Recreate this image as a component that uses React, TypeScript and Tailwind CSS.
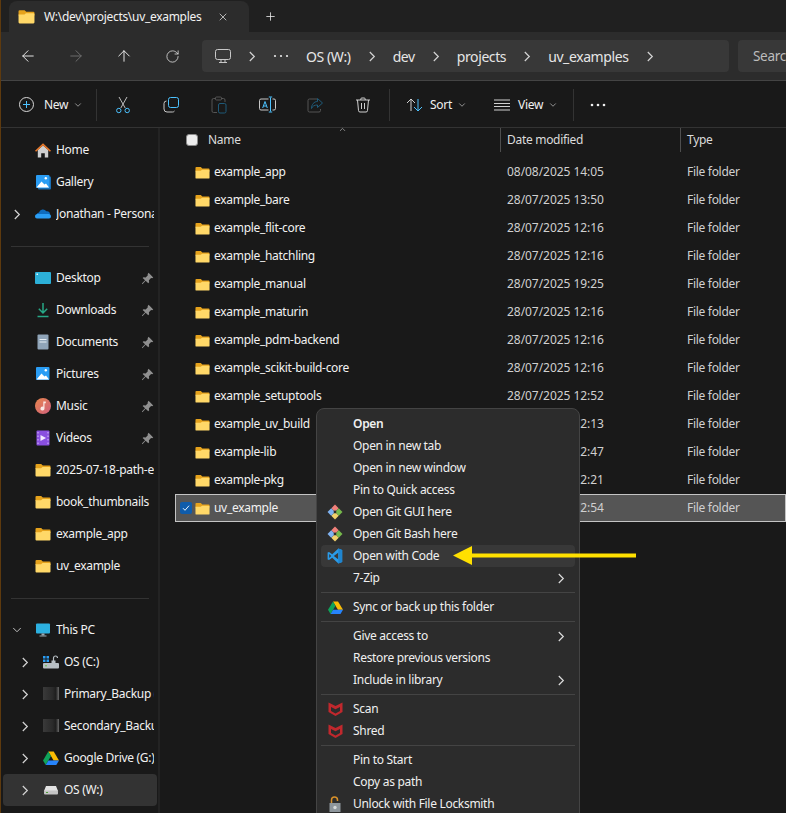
import type { ReactNode } from 'react';
import {
  ArrowLeft,
  ArrowRight,
  ArrowUp,
  ChevronDown,
  Plus,
  RotateCw,
  X,
} from 'lucide-react';

function Folder({ size = 15 }: { size?: number }) {
  return (
    <svg width={size} height={size} viewBox="0 0 16 16" className="shrink-0">
      <path d="M.5 3a1 1 0 0 1 1-1h4.700l1.600 1.600H14.500a1 1 0 0 1 1 1V7H.5z" fill="#e5a21c" />
      <path d="M.5 6.200h5.600L7.500 5h7a1 1 0 0 1 1 1v7.500a1 1 0 0 1-1 1h-13a1 1 0 0 1-1-1z" fill="#ffd868" />
    </svg>
  );
}

function Chevron({ color = '#d4d4d4' }: { color?: string }) {
  return (
    <svg width="8" height="11" viewBox="0 0 8 11" fill="none" stroke={color} strokeWidth="1.200" className="shrink-0">
      <path d="M1.800 1 6.300 5.500 1.800 10" />
    </svg>
  );
}

function Pin() {
  return (
    <svg width="13" height="13" viewBox="0 0 12 12" className="shrink-0">
      <path d="M7 .7l4.300 4.300-1 .7-1-.2-2 2 .2 2-.8.8L4.300 8.100 1.300 11.200.8 10.700l3-3L1.500 5.600l.8-.8 2 .2 2-2-.2-1z" fill="#8f8f8f" />
    </svg>
  );
}

function HomeIcon() {
  return (
    <svg width="17" height="17" viewBox="0 0 16 16">
      <path d="M2.800 7.500 8 3l5.200 4.500V15H9.800v-4.300H6.200V15H2.800z" fill="#cfcfcf" />
      <path d="M0 8.200 8 .8l8 7.400-1.100 1L8 3 1.100 9.200z" fill="#e8782a" />
    </svg>
  );
}

function GalleryIcon({ stacked }: { stacked?: boolean }) {
  return (
    <svg width="16" height="16" viewBox="0 0 16 16">
      {stacked && <rect x="3" y="2.500" width="13" height="13" rx="1" fill="#1a6fb5" />}
      <rect x="1" y="1" width="13.500" height="13" rx="1" fill="#2a9df4" />
      <path d="M1.500 13.500 6.500 7.500 9.500 10.500 11 9.500l3 4z" fill="#ffffff" />
      <circle cx="10.800" cy="4.300" r="1.200" fill="#ffffff" />
    </svg>
  );
}

function CloudIcon() {
  return (
    <svg width="16" height="16" viewBox="0 0 16 16">
      <path d="M4 6.500a4 4 0 0 1 7.300-1.200A3.200 3.200 0 0 1 15 8v1H1.500A3 3 0 0 1 4 6.500z" fill="#0f6cbd" />
      <path d="M0 10.500A2.500 2.500 0 0 1 3 8h10a2.500 2.500 0 0 1 3 2.500 2 2 0 0 1-2 2H2a2 2 0 0 1-2-2z" fill="#2a9df4" />
    </svg>
  );
}

function DesktopIcon() {
  return (
    <svg width="16" height="16" viewBox="0 0 16 16">
      <rect x="0" y="2" width="16" height="12" rx="1" fill="#2cb0d8" />
      <rect x="1.500" y="3.500" width="1.500" height="1.500" fill="#e5f7fb" />
    </svg>
  );
}

function DownloadIcon() {
  return (
    <svg width="16" height="16" viewBox="0 0 16 16" fill="none" stroke="#27a887" strokeWidth="1.500">
      <path d="M8 1v9.500M3.800 6.800 8 11l4.200-4.200M2.500 14.500h11" />
    </svg>
  );
}

function DocumentIcon() {
  return (
    <svg width="16" height="16" viewBox="0 0 16 16">
      <rect x="2.500" y="0.500" width="11" height="15" rx="1" fill="#8fa4b8" />
      <rect x="4.500" y="5" width="7" height="1" fill="#e6edf3" />
      <rect x="4.500" y="7.500" width="7" height="1" fill="#e6edf3" />
    </svg>
  );
}

function MusicIcon() {
  return (
    <svg width="16" height="16" viewBox="0 0 16 16">
      <defs>
        <linearGradient id="music" x1="0" y1="0" x2="1" y2="1">
          <stop offset="0" stopColor="#e8854c" />
          <stop offset="1" stopColor="#d0607e" />
        </linearGradient>
      </defs>
      <circle cx="8" cy="8" r="8" fill="url(#music)" />
      <path d="M8.300 3.500h2.500v1.700H9.500V10.500a2 2 0 1 1-1.200-1.800z" fill="#fbe9e4" />
    </svg>
  );
}

function VideoIcon() {
  return (
    <svg width="16" height="16" viewBox="0 0 16 16">
      <rect x="1.500" y="0.500" width="13" height="15" rx="1" fill="#8a4fe0" />
      <path d="M5.500 5 11 8l-5.500 3z" fill="#f3eaff" />
      <path d="M3 2v1.500M3 5.500V7M3 9v1.500M3 12.500V14M13 2v1.500M13 5.500V7M13 9v1.500M13 12.500V14" stroke="#d6bdfa" strokeWidth="1" />
    </svg>
  );
}

function MonitorIcon() {
  return (
    <svg width="16" height="16" viewBox="0 0 16 16">
      <rect x="1" y="1.500" width="14" height="10" rx="1" fill="#2cb0e0" />
      <rect x="6.500" y="11.500" width="3" height="2" fill="#9aa7b0" />
      <rect x="4.500" y="13.500" width="7" height="1" fill="#9aa7b0" />
    </svg>
  );
}

function DriveCIcon() {
  return (
    <svg width="16" height="16" viewBox="0 0 16 16">
      <rect x="0" y="9" width="16" height="5.500" rx="1" fill="#b8bfc4" />
      <rect x="2" y="11.300" width="2" height="1" fill="#5fc74a" />
      <rect x="0" y="2" width="2.500" height="2.500" fill="#2a9df4" />
      <rect x="3.500" y="2" width="2.500" height="2.500" fill="#2a9df4" />
      <rect x="0" y="5.500" width="2.500" height="2.500" fill="#2a9df4" />
      <rect x="3.500" y="5.500" width="2.500" height="2.500" fill="#2a9df4" />
      <path d="M10.500 8V4a2 2 0 0 1 4 0" fill="none" stroke="#b8bfc4" strokeWidth="1.200" />
      <rect x="8.500" y="6.500" width="4" height="2.500" fill="#b8bfc4" />
    </svg>
  );
}

function BlurDriveIcon() {
  return (
    <svg width="16" height="16" viewBox="0 0 16 16">
      <defs>
        <linearGradient id="blurDrive" x1="0" y1="0" x2="1" y2="0">
          <stop offset="0" stopColor="#3a3a3a" />
          <stop offset="0.600" stopColor="#2a2a2a" />
          <stop offset="0.800" stopColor="#1e1e1e" />
          <stop offset="1" stopColor="#6a6a6a" />
        </linearGradient>
      </defs>
      <rect x="0" y="1" width="16" height="13" fill="url(#blurDrive)" />
    </svg>
  );
}

function DriveLogo({ size = 16 }: { size?: number }) {
  return (
    <svg width={size} height={size} viewBox="0 0 16 16">
      <path d="M5.300 1.500h5.400l5.300 9h-5.400z" fill="#fbbc04" />
      <path d="M5.300 1.500 0 10.500l2.700 4.500L8 6z" fill="#0fa35a" />
      <path d="M5.400 10.500H16L13.300 15H2.700z" fill="#2684fc" />
    </svg>
  );
}

function WDriveIcon() {
  return (
    <svg width="16" height="16" viewBox="0 0 16 16">
      <path d="M3 4h10l2 5H1z" fill="#e2e2e2" />
      <rect x="1" y="8.500" width="14" height="4" rx="1" fill="#c4c4c4" />
      <rect x="3" y="10" width="2" height="1" fill="#4f9e3a" />
    </svg>
  );
}

function GitIcon() {
  return (
    <svg width="16" height="16" viewBox="0 0 16 16">
      <path d="M8 0.500 11.700 4.200 8 8 4.300 4.200z" fill="#f0807a" />
      <path d="M11.800 4.300 15.500 8 11.800 11.700 8.100 8z" fill="#76b94c" />
      <path d="M8 8.100l3.700 3.700L8 15.500l-3.700-3.700z" fill="#f2d16b" />
      <path d="M4.200 4.300 7.900 8l-3.700 3.700L.5 8z" fill="#7fb2f0" />
      <circle cx="8" cy="8" r="1.400" fill="#2c2c2c" />
    </svg>
  );
}

function VsCodeIcon() {
  return (
    <svg width="16" height="16" viewBox="0 0 16 16">
      <path d="M11.400.6 5.200 6.300 2 3.900.6 4.600v6.800l1.400.7 3.200-2.400 6.200 5.700 3.800-1.500V2.100zM2.200 10V6l2 2zm9 1.300L6.800 8l4.400-3.300z" fill="#2a9be8" />
      <path d="M11.400.6l3.800 1.500v11.800l-3.800 1.500z" fill="#1f85d0" />
    </svg>
  );
}

function McafeeIcon() {
  return (
    <svg width="15" height="16" viewBox="0 0 15 16">
      <path d="M.5 1.500 4 3.300 7.500 5 11 3.300l3.500-1.800V11L7.500 15 .5 11z" fill="#c0282d" />
      <path d="M3 6v3.900l4.500 2.500 4.500-2.500V6L7.500 8.200z" fill="#2c2c2c" />
    </svg>
  );
}

function LockIcon() {
  return (
    <svg width="14" height="16" viewBox="0 0 14 16">
      <path d="M3.500 7V4a3 3 0 0 1 6 0v1" fill="none" stroke="#d9912a" strokeWidth="1.500" />
      <rect x="1.500" y="7" width="11" height="9" fill="#8e969c" />
      <circle cx="7" cy="11.500" r="1.700" fill="#d5d8da" />
    </svg>
  );
}

// toolbar glyphs, the blue bits are the windows accent
function CutIcon() {
  return (
    <svg width="16" height="18" viewBox="0 0 16 18" fill="none" strokeWidth="1">
      <path d="M4 1l6.200 11M12 1 5.800 12" stroke="#bdbdbd" />
      <circle cx="3.800" cy="14.500" r="2.200" stroke="#4cc2ff" />
      <circle cx="12.200" cy="14.500" r="2.200" stroke="#4cc2ff" />
    </svg>
  );
}

function CopyIcon() {
  return (
    <svg width="16" height="16" viewBox="0 0 16 16" fill="none" strokeWidth="1">
      <rect x="5.500" y="0.500" width="10" height="10" rx="2" stroke="#4cc2ff" />
      <path d="M3.500 4A2.500 2.500 0 0 0 1 6.500V12a3 3 0 0 0 3 3h5.500a2.500 2.500 0 0 0 2-1" stroke="#c8c8c8" />
    </svg>
  );
}

function PasteIcon() {
  return (
    <svg width="16" height="18" viewBox="0 0 16 18" fill="none" strokeWidth="1">
      <path d="M4 2.500H2.500a1.500 1.500 0 0 0-1.500 1.500v11a1.500 1.500 0 0 0 1.500 1.500H6M11 2.500h1.500A1.500 1.500 0 0 1 14 4v2" stroke="#555555" />
      <rect x="4.500" y="1" width="6" height="3" rx="1" stroke="#555555" />
      <rect x="7.500" y="7.500" width="7.500" height="9.500" rx="1.500" stroke="#1f5a78" />
    </svg>
  );
}

function RenameIcon() {
  return (
    <svg width="17" height="18" viewBox="0 0 17 18" fill="none" strokeWidth="1">
      <path d="M9.500 3H2a1.500 1.500 0 0 0-1.500 1.500v8A1.500 1.500 0 0 0 2 14h7.500M13.500 3H15a1.500 1.500 0 0 1 1.500 1.500v8A1.500 1.500 0 0 1 15 14h-1.500" stroke="#c8c8c8" />
      <path d="M3.700 12 6 5.500 8.300 12M4.500 10h3" stroke="#4cc2ff" />
      <path d="M11.500 1.500v14M9.800 1h3.400M9.800 16h3.400" stroke="#4cc2ff" />
    </svg>
  );
}

function ShareIcon() {
  return (
    <svg width="16" height="16" viewBox="0 0 16 16" fill="none" strokeWidth="1">
      <path d="M10 2H2.500A1.500 1.500 0 0 0 1 3.500v10A1.500 1.500 0 0 0 2.500 15H12a1.500 1.500 0 0 0 1.500-1.500V12" stroke="#555555" />
      <path d="M10.500 1.500 15.500 6l-5 4.500V8C7.500 8 5.500 9 4.500 11.500 4.500 7.500 7 4.500 10.500 4.500z" stroke="#1f5a78" />
    </svg>
  );
}

function TrashIcon() {
  return (
    <svg width="16" height="16" viewBox="0 0 16 16" fill="none" stroke="#d0d0d0" strokeWidth="1">
      <path d="M1 3h14M5.800 3V2A1 1 0 0 1 6.800 1h2.400a1 1 0 0 1 1 1v1M2.500 3l1 10.500A1.500 1.500 0 0 0 5 15h6a1.500 1.500 0 0 0 1.500-1.500l1-10.500M6.500 6v6M9.500 6v6" />
    </svg>
  );
}

function SortIcon() {
  return (
    <svg width="17" height="14" viewBox="0 0 17 14" fill="none" strokeWidth="1">
      <path d="M5 13V1M1 5l4-4 4 4" stroke="#d0d0d0" />
      <path d="M12 1v12M8 9l4 4 4-4" stroke="#4cc2ff" />
    </svg>
  );
}

function ViewIcon() {
  return (
    <svg width="16" height="12" viewBox="0 0 16 12" stroke="#d0d0d0" strokeWidth="1">
      <path d="M0 1h16M0 4.500h16M0 7.500h16M0 11h16" />
    </svg>
  );
}

function Dots({ color = '#e8e8e8', r = 1.100 }: { color?: string; r?: number }) {
  return (
    <svg width="16" height="4" viewBox="0 0 16 4" fill={color} className="shrink-0">
      <circle cx="2" cy="2" r={r} />
      <circle cx="8" cy="2" r={r} />
      <circle cx="14" cy="2" r={r} />
    </svg>
  );
}

type NavItem = { label: string; icon: ReactNode; level?: 0 | 1; pin?: boolean; chevron?: 'right' | 'down'; selected?: boolean };

const navTop: NavItem[] = [
  { label: 'Home', icon: <HomeIcon /> },
  { label: 'Gallery', icon: <GalleryIcon stacked /> },
  { label: 'Jonathan - Personal', icon: <CloudIcon />, chevron: 'right' },
];

const navQuick: NavItem[] = [
  { label: 'Desktop', icon: <DesktopIcon />, pin: true },
  { label: 'Downloads', icon: <DownloadIcon />, pin: true },
  { label: 'Documents', icon: <DocumentIcon />, pin: true },
  { label: 'Pictures', icon: <GalleryIcon />, pin: true },
  { label: 'Music', icon: <MusicIcon />, pin: true },
  { label: 'Videos', icon: <VideoIcon />, pin: true },
  { label: '2025-07-18-path-error', icon: <Folder size={16} /> },
  { label: 'book_thumbnails', icon: <Folder size={16} /> },
  { label: 'example_app', icon: <Folder size={16} /> },
  { label: 'uv_example', icon: <Folder size={16} /> },
];

const navPc: NavItem[] = [
  { label: 'This PC', icon: <MonitorIcon />, chevron: 'down' },
  { label: 'OS (C:)', icon: <DriveCIcon />, level: 1, chevron: 'right' },
  { label: 'Primary_Backup (E:)', icon: <BlurDriveIcon />, level: 1, chevron: 'right' },
  { label: 'Secondary_Backup (F:)', icon: <BlurDriveIcon />, level: 1, chevron: 'right' },
  { label: 'Google Drive (G:)', icon: <DriveLogo />, level: 1, chevron: 'right' },
  { label: 'OS (W:)', icon: <WDriveIcon />, level: 1, chevron: 'right', selected: true },
];

const files = [
  ['example_app', '08/08/2025 14:05'],
  ['example_bare', '28/07/2025 13:50'],
  ['example_flit-core', '28/07/2025 12:16'],
  ['example_hatchling', '28/07/2025 12:16'],
  ['example_manual', '28/07/2025 19:25'],
  ['example_maturin', '28/07/2025 12:16'],
  ['example_pdm-backend', '28/07/2025 12:16'],
  ['example_scikit-build-core', '28/07/2025 12:16'],
  ['example_setuptools', '28/07/2025 12:52'],
  ['example_uv_build', '28/07/2025 12:13'],
  ['example-lib', '28/07/2025 12:47'],
  ['example-pkg', '28/07/2025 12:21'],
  ['uv_example', '28/07/2025 12:54'],
];

type MenuEntry = { label?: string; icon?: ReactNode; bold?: boolean; sub?: boolean; hover?: boolean; divider?: boolean };

const menu: MenuEntry[] = [
  { label: 'Open', bold: true },
  { label: 'Open in new tab' },
  { label: 'Open in new window' },
  { label: 'Pin to Quick access' },
  { label: 'Open Git GUI here', icon: <GitIcon /> },
  { label: 'Open Git Bash here', icon: <GitIcon /> },
  { label: 'Open with Code', icon: <VsCodeIcon />, hover: true },
  { label: '7-Zip', sub: true },
  { divider: true },
  { label: 'Sync or back up this folder', icon: <DriveLogo size={15} /> },
  { divider: true },
  { label: 'Give access to', sub: true },
  { label: 'Restore previous versions' },
  { label: 'Include in library', sub: true },
  { divider: true },
  { label: 'Scan', icon: <McafeeIcon /> },
  { label: 'Shred', icon: <McafeeIcon /> },
  { divider: true },
  { label: 'Pin to Start' },
  { label: 'Copy as path' },
  { label: 'Unlock with File Locksmith', icon: <LockIcon /> },
];

function SidebarRow({ item }: { item: NavItem }) {
  const level = item.level ?? 0;
  return (
    <div
      className={`h-[32px] flex items-center pr-[3px] rounded-[4px] ml-[3px] w-[154px] overflow-hidden ${item.selected ? 'bg-[#333333]' : ''} ${level === 1 ? 'pl-[18px]' : 'pl-[10px]'}`}
    >
      <span className="w-[8px] shrink-0 mr-[14px] flex justify-center">
        {item.chevron === 'right' && <Chevron />}
        {item.chevron === 'down' && <ChevronDown size={14} strokeWidth={1.5} className="shrink-0 text-[#d4d4d4]" />}
      </span>
      <span className="w-[16px] h-[16px] shrink-0 mr-[5px] flex items-center justify-center">{item.icon}</span>
      <span className="flex-1 min-w-0 whitespace-nowrap overflow-hidden text-[#f2f2f2]">{item.label}</span>
      {item.pin && <Pin />}
    </div>
  );
}

function Crumb({ children }: { children: ReactNode }) {
  return <span className="text-[14px] tracking-[-0.4px] text-[#e6e6e6] whitespace-nowrap">{children}</span>;
}

function ToolButton({ children }: { children: ReactNode }) {
  return <div className="w-[48px] h-full shrink-0 flex items-center justify-center">{children}</div>;
}

export default function App() {
  return (
    <div className="relative w-[786px] h-[813px] overflow-hidden bg-[#191919] flex flex-col text-[12px] tracking-[-0.3px] text-[#f0f0f0] font-['Noto_Sans',sans-serif]">
      <div className="absolute left-0 top-0 bottom-0 w-px bg-[#5e3a0e]" />

      {/* Tabs */}
      <div className="h-[32px] shrink-0 bg-[#202020] pl-[9px] pt-px flex items-start">
        <div className="w-[240px] h-[31px] bg-[#2c2c2c] rounded-t-[8px] flex items-center pl-[9px]">
          <Folder size={17} />
          <span className="ml-[9px] w-[173px] whitespace-nowrap text-[#f2f2f2]">W:\dev\projects\uv_examples</span>
          <X size={12} strokeWidth={1.5} className="text-[#e0e0e0]" />
        </div>
        <Plus size={13} strokeWidth={1.5} className="ml-[15px] mt-[9px] text-[#e8e8e8]" />
      </div>

      {/* Nav and address */}
      <div className="h-[49px] shrink-0 bg-[#2c2c2c] border-b border-[#444444] flex items-center pl-[4px]">
        <ToolButton><ArrowLeft size={18} strokeWidth={1.25} className="text-[#f0f0f0]" /></ToolButton>
        <ToolButton><ArrowRight size={18} strokeWidth={1.25} className="text-[#707070]" /></ToolButton>
        <ToolButton><ArrowUp size={18} strokeWidth={1.25} className="text-[#f0f0f0]" /></ToolButton>
        <ToolButton><RotateCw size={15} strokeWidth={1.25} className="text-[#e4e4e4]" /></ToolButton>
        <div className="ml-[6px] w-[527px] h-[32px] shrink-0 bg-[#383838] rounded-[4px] flex items-center pl-[13px] gap-[17px]">
          <svg width="16" height="16" viewBox="0 0 16 16" fill="none" stroke="#c8c8c8" className="shrink-0">
            <rect x="0.500" y="1.500" width="15" height="10" rx="2" />
            <path d="M6 11.500v2.500M10 11.500v2.500M4 14.500h8" />
          </svg>
          <Chevron />
          <Dots />
          <Crumb>OS (W:)</Crumb>
          <Chevron />
          <Crumb>dev</Crumb>
          <Chevron />
          <Crumb>projects</Crumb>
          <Chevron />
          <Crumb>uv_examples</Crumb>
          <Chevron />
        </div>
        <div className="ml-[9px] w-[200px] h-[32px] shrink-0 bg-[#383838] rounded-[4px] flex items-center pl-[15px] text-[13.5px] text-[#bdbdbd]">
          Search
        </div>
      </div>

      {/* Command bar */}
      <div className="h-[47px] shrink-0 border-b border-[#333333] pt-px flex items-center">
        <div className="w-[96px] h-full flex items-center pl-[19px] shrink-0">
          <svg width="15" height="15" viewBox="0 0 15 15" fill="none">
            <circle cx="7.500" cy="7.500" r="7" stroke="#d8d8d8" />
            <path d="M7.500 4v7M4 7.500h7" stroke="#4cc2ff" />
          </svg>
          <span className="ml-[10px] w-[25px]">New</span>
          <ChevronDown size={10} className="ml-[4px] text-[#a8a8a8]" />
        </div>
        <div className="w-px h-[32px] bg-[#333333] shrink-0" />
        <div className="flex h-full ml-[2px] shrink-0">
          <ToolButton><CutIcon /></ToolButton>
          <ToolButton><CopyIcon /></ToolButton>
          <ToolButton><PasteIcon /></ToolButton>
          <ToolButton><RenameIcon /></ToolButton>
          <ToolButton><ShareIcon /></ToolButton>
          <ToolButton><TrashIcon /></ToolButton>
        </div>
        <div className="w-px h-[32px] bg-[#333333] ml-[2px] shrink-0" />
        <div className="ml-[16px] flex items-center shrink-0">
          <SortIcon />
          <span className="ml-[7px] w-[27px]">Sort</span>
          <ChevronDown size={10} className="text-[#a8a8a8]" />
        </div>
        <div className="ml-[27px] flex items-center shrink-0">
          <ViewIcon />
          <span className="ml-[8px] w-[30px]">View</span>
          <ChevronDown size={10} className="text-[#a8a8a8]" />
        </div>
        <div className="w-px h-[32px] bg-[#333333] ml-[15px] shrink-0" />
        <div className="ml-[16px]"><Dots color="#f0f0f0" r={1.300} /></div>
      </div>

      {/* Body */}
      <div className="flex-1 min-h-0 flex">
        <aside className="w-[160px] shrink-0 border-r-2 border-[#232323] pt-[6px]">
          {navTop.map(item => <SidebarRow key={item.label} item={item} />)}
          <div className="h-[32px] flex items-center pl-[11px]"><div className="w-[138px] h-px bg-[#333333]" /></div>
          {navQuick.map(item => <SidebarRow key={item.label} item={item} />)}
          <div className="h-[32px] flex items-center pl-[11px]"><div className="w-[138px] h-px bg-[#333333]" /></div>
          {navPc.map(item => <SidebarRow key={item.label} item={item} />)}
        </aside>

        <main className="flex-1 min-w-0">
          {/* Column header */}
          <div className="h-[24px] flex items-center relative text-[#dcdcdc]">
            <div className="w-[12px] h-[12px] ml-[26px] rounded-[3px] bg-[#ececec] border border-[#8a8a8a] shrink-0" />
            <span className="ml-[10px] w-[292px]">Name</span>
            <ChevronDown size={9} className="absolute left-[178px] top-[-3px] rotate-180 text-[#a8a8a8]" />
            <div className="w-px h-full bg-[#4e4e4e] shrink-0" />
            <span className="ml-[6px] w-[173px]">Date modified</span>
            <div className="w-px h-full bg-[#4e4e4e] shrink-0" />
            <span className="ml-[6px]">Type</span>
          </div>

          {/* Files */}
          <div className="mt-[6px] ml-[15px]">
            {files.map(([name, date]) => {
              const selected = name === 'uv_example';
              return (
                <div
                  key={name}
                  className={`h-[28px] flex items-center ${selected ? 'bg-[#555555] shadow-[inset_0_0_0_1px_#c4c4c4]' : ''}`}
                >
                  <span className="w-[20px] shrink-0 flex pl-[5px]">
                    {selected && (
                      <span className="w-[12px] h-[12px] rounded-[2px] bg-[#0f5cab] flex items-center justify-center">
                        <svg width="8" height="8" viewBox="0 0 8 8" fill="none" stroke="#e8f3ff">
                          <path d="M1 4.200 3 6.300 7 1.700" />
                        </svg>
                      </span>
                    )}
                  </span>
                  <Folder />
                  <span className="ml-[4px] w-[293px] shrink-0 whitespace-nowrap text-[#f2f2f2]">{name}</span>
                  <span className="w-[180px] shrink-0 tracking-[-0.05px] text-[#d0d0d0]">{date}</span>
                  <span className="text-[#d0d0d0]">File folder</span>
                </div>
              );
            })}
          </div>
        </main>
      </div>

      {/* Context menu */}
      <div className="absolute left-[316px] top-[408px] w-[264px] h-[420px] bg-[#2c2c2c] border border-[#444444] rounded-[8px] pt-[4px] px-[4px] text-[#f0f0f0]">
        {menu.map((entry, i) =>
          entry.divider ? (
            <div key={i} className="h-[7px] flex items-center"><div className="w-full h-px bg-[#444444]" /></div>
          ) : (
            <div key={i} className={`h-[22px] flex items-center rounded-[4px] ${entry.hover ? 'bg-[#383838]' : ''}`}>
              <span className="w-[28px] shrink-0 flex justify-center">{entry.icon}</span>
              <span className={`ml-[4px] flex-1 whitespace-nowrap ${entry.bold ? 'font-semibold' : ''}`}>{entry.label}</span>
              {entry.sub && <span className="mr-[10px]"><Chevron color="#dcdcdc" /></span>}
            </div>
          )
        )}
      </div>

      {/* Annotation arrow */}
      <svg className="absolute left-[450px] top-[540px]" width="190" height="30" viewBox="0 0 190 30">
        <path d="M3 15.500 22 6v7.500h164v4H22V25z" fill="#ffe000" />
      </svg>
    </div>
  );
}
